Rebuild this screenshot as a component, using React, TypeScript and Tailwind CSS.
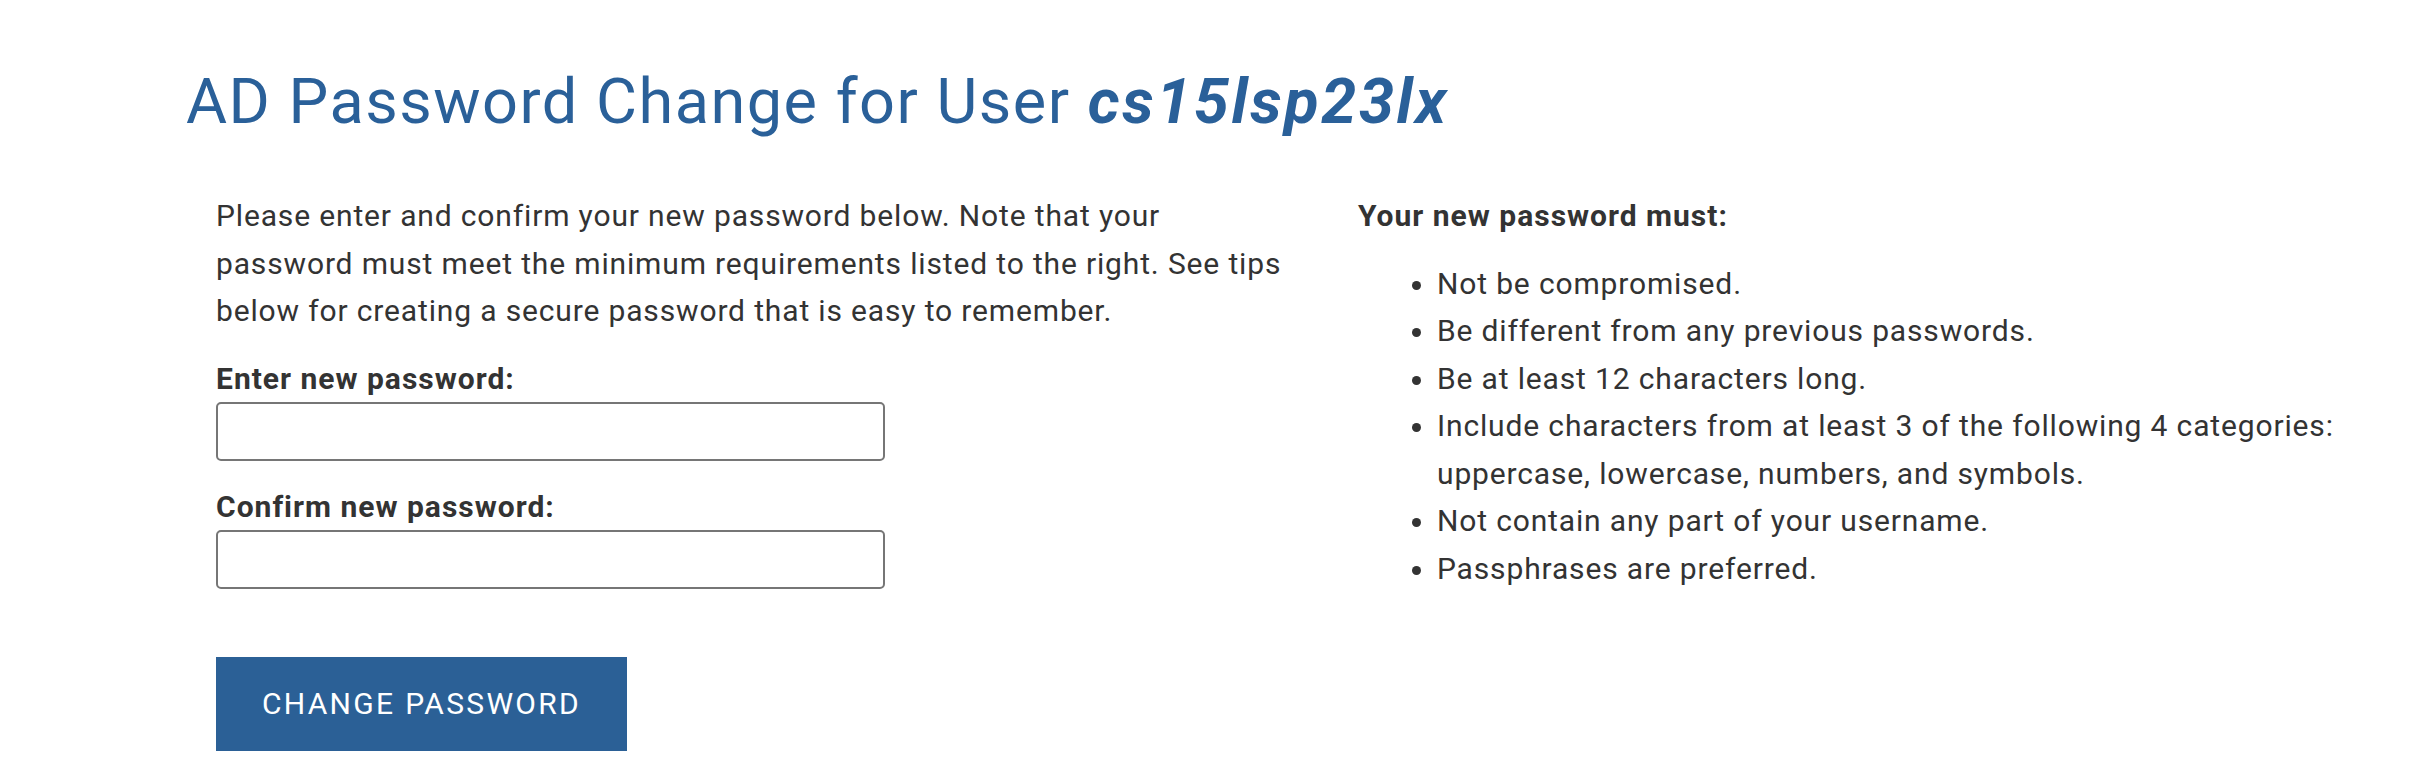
import React from "react";

export default function App() {
  const items = [
    "Not be compromised.",
    "Be different from any previous passwords.",
    "Be at least 12 characters long.",
    "Include characters from at least 3 of the following 4 categories: uppercase, lowercase, numbers, and symbols.",
    "Not contain any part of your username.",
    "Passphrases are preferred.",
  ];
  return (
    <div className="min-h-[782px] w-full bg-white text-[#333333] [font-family:Roboto,'Liberation_Sans',sans-serif]">
      <div className="pl-[186px] pt-[64px]">
        <h1 className="text-[63px] leading-[76px] font-normal tracking-[1.5px] text-[#2a6099]">
          AD Password Change for User <b className="font-bold italic tracking-[2.6px]">cs15lsp23lx</b>
        </h1>
      </div>
      <div className="flex pl-[186px] mt-[52px]">
        <div className="w-[1142px] pl-[30px] pr-[40px]">
          <p className="text-[30px] leading-[47.5px] tracking-[0.85px]">
            Please enter and confirm your new password below. Note that your password must meet the minimum
            requirements listed to the right. See tips below for creating a secure password that is easy to
            remember.
          </p>
          <div className="mt-[27px]">
            <label className="block text-[30px] leading-[34px] font-bold tracking-[1px] mb-[6px]">
              Enter new password:
            </label>
            <input
              type="password"
              className="block w-[669px] h-[59px] border-2 border-[#767676] rounded-[5px] bg-white"
            />
          </div>
          <div className="mt-[29px]">
            <label className="block text-[30px] leading-[34px] font-bold tracking-[1px] mb-[6px]">
              Confirm new password:
            </label>
            <input
              type="password"
              className="block w-[669px] h-[59px] border-2 border-[#767676] rounded-[5px] bg-white"
            />
          </div>
          <button className="mt-[68px] w-[411px] h-[94px] bg-[#2b6096] text-white text-[30px] tracking-[2.3px] uppercase">
            Change Password
          </button>
        </div>
        <div className="flex-1 pl-[30px] pr-[30px]">
          <p className="text-[30px] leading-[47.5px] font-bold tracking-[1px]">Your new password must:</p>
          <ul className="mt-[20px] list-disc pl-[79px] text-[30px] leading-[47.5px] tracking-[0.85px]">
            {items.map((t) => (
              <li key={t}>{t}</li>
            ))}
          </ul>
        </div>
      </div>
    </div>
  );
}
